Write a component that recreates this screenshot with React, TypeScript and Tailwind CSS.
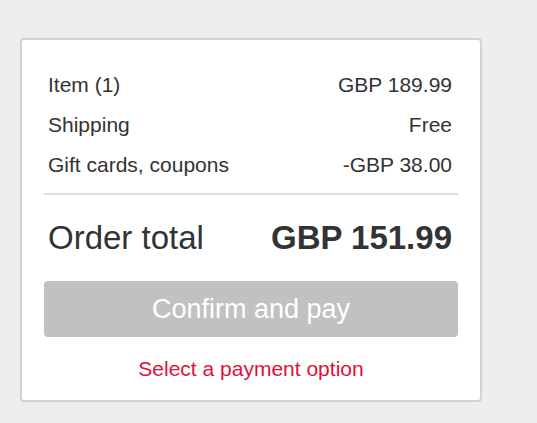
const rows = [
  { label: "Item (1)", value: "GBP 189.99" },
  { label: "Shipping", value: "Free" },
  { label: "Gift cards, coupons", value: "-GBP 38.00" },
];

export default function App() {
  return (
    <div
      className="min-h-[423px] w-[537px] bg-[#efeeec] pt-[38px] pl-[20px] text-[#333]"
      style={{ fontFamily: '"Liberation Sans", Arial, sans-serif' }}
    >
      <div className="w-[462px] h-[364px] rounded-[4px] border-2 border-[#d2d2d2] bg-white px-[22px] pt-[25px]">
        {rows.map((row) => (
          <div key={row.label} className="flex h-[40px] items-center justify-between pl-[4px] pr-[6px] text-[21px]">
            <span>{row.label}</span>
            <span>{row.value}</span>
          </div>
        ))}
        <div className="mt-[8px] h-[2px] bg-[#dddddd]" />
        <div className="flex h-[86px] items-center justify-between pl-[4px] pr-[6px]">
          <span className="text-[33px]">Order total</span>
          <span className="text-[33px] font-bold">GBP 151.99</span>
        </div>
        <button className="flex h-[56px] w-full items-center justify-center rounded-[4px] bg-[#c1c1c1] text-[27px] text-white">
          Confirm and pay
        </button>
        <div className="mt-[20px] text-center text-[21px] leading-[24px] text-[#e0103a]">
          Select a payment option
        </div>
      </div>
    </div>
  );
}
